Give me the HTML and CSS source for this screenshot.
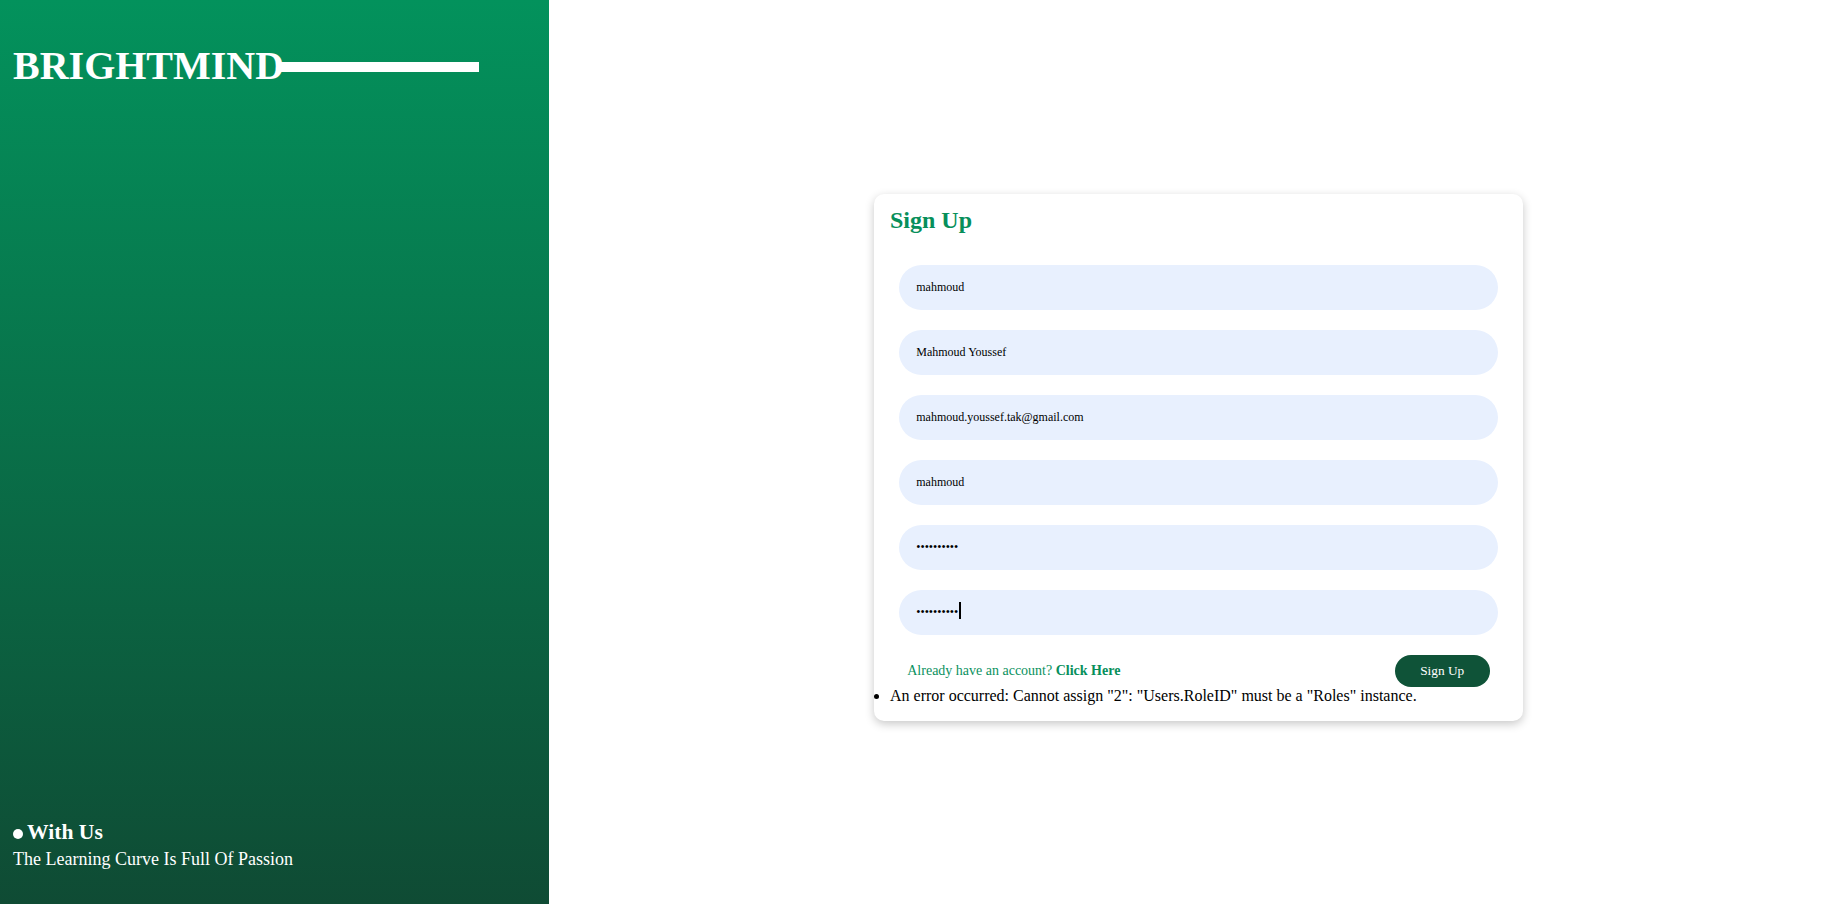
FILE: index.html
```html
<!DOCTYPE html>
<html lang="en">
<head>
<meta charset="utf-8">
<title>BrightMind - Sign Up</title>
<link rel="stylesheet" href="styles.css">
</head>
<body>
<div class="page">
  <aside class="side">
    <h1 class="brand">BRIGHTMIND</h1>
    <div class="tagline">
      <div class="tag-title"><span class="dot"></span>With Us</div>
      <p class="tag-sub">The Learning Curve Is Full Of Passion</p>
    </div>
  </aside>
  <main class="main">
    <div class="card">
      <h2 class="card-title">Sign Up</h2>
      <form class="form">
        <input class="field" type="text" value="mahmoud">
        <input class="field" type="text" value="Mahmoud Youssef">
        <input class="field" type="email" value="mahmoud.youssef.tak@gmail.com">
        <input class="field" type="text" value="mahmoud">
        <input class="field" type="password" value="mahmoud123">
        <div class="field-wrap">
          <input class="field field-full" type="password" value="mahmoud123">
          <span class="caret"></span>
        </div>
        <div class="actions">
          <span class="login">Already have an account? <b>Click Here</b></span>
          <button class="btn" type="button">Sign Up</button>
        </div>
      </form>
      <ul class="errors">
        <li>An error occurred: Cannot assign "2": "Users.RoleID" must be a "Roles" instance.</li>
      </ul>
    </div>
  </main>
</div>
</body>
</html>
```
FILE: styles.css
```css
* { box-sizing: border-box; }
html, body { margin: 0; padding: 0; height: 100%; }
body { font-family: "Liberation Serif", "Times New Roman", serif; background: #fff; }

.page { display: flex; height: 904px; }

.side {
  width: 549px;
  flex: none;
  background: linear-gradient(180deg, #03925c 0%, #0f4b34 100%);
  color: #fff;
  display: flex;
  flex-direction: column;
  justify-content: space-between;
  padding: 42px 12px 34px 13px;
}
.brand {
  margin: 0;
  display: flex;
  align-items: flex-start;
  font-size: 40px;
  font-weight: bold;
  line-height: normal;
}
.brand::after {
  content: "";
  display: block;
  width: 199px;
  height: 10px;
  background: #fff;
  margin-top: 20px;
  margin-left: -4px;
}
.tag-title {
  display: flex;
  align-items: center;
  font-size: 21.6px;
  font-weight: bold;
}
.dot {
  width: 10px;
  height: 10px;
  border-radius: 50%;
  background: #fff;
  margin-right: 4px;
  margin-top: 3px;
}
.tag-sub { margin: 4px 0 0; font-size: 18px; }

.main {
  flex: 1;
  display: flex;
  justify-content: center;
  align-items: center;
  padding: 10px 0 0 16px;
}
.card {
  width: 649px;
  background: #fff;
  border-radius: 10px;
  box-shadow: 0 3px 10px rgba(0, 0, 0, 0.22);
  padding: 13px 16px 16px;
}
.card-title {
  margin: 0;
  font-size: 24px;
  color: #078f5b;
  line-height: normal;
}
.form {
  margin-top: 31px;
  display: flex;
  flex-direction: column;
  align-items: center;
  gap: 20px;
}
.field {
  width: 97%;
  height: 45px;
  border: none;
  outline: none;
  border-radius: 999px;
  background: #e8f0fe;
  padding: 0 17px;
  font-family: "Liberation Serif", serif;
  font-size: 12px;
  color: #000;
}
.field-wrap { width: 97%; position: relative; }
.field-full { width: 100%; display: block; }
.caret {
  position: absolute;
  left: 60px;
  top: 12px;
  width: 1.5px;
  height: 17px;
  background: #000;
}
.actions {
  width: 97%;
  display: flex;
  justify-content: space-between;
  align-items: center;
  padding: 0 8px;
}
.login { font-size: 14px; color: #0a9160; }
.login b { color: #078f5b; }
.btn {
  height: 32px;
  width: 95px;
  border: none;
  border-radius: 999px;
  background: #0f5338;
  color: #fff;
  font-family: "Liberation Serif", serif;
  font-size: 13.33px;
  padding: 0;
}
.errors { margin: 0; padding: 0; font-size: 16px; color: #000; }
```
